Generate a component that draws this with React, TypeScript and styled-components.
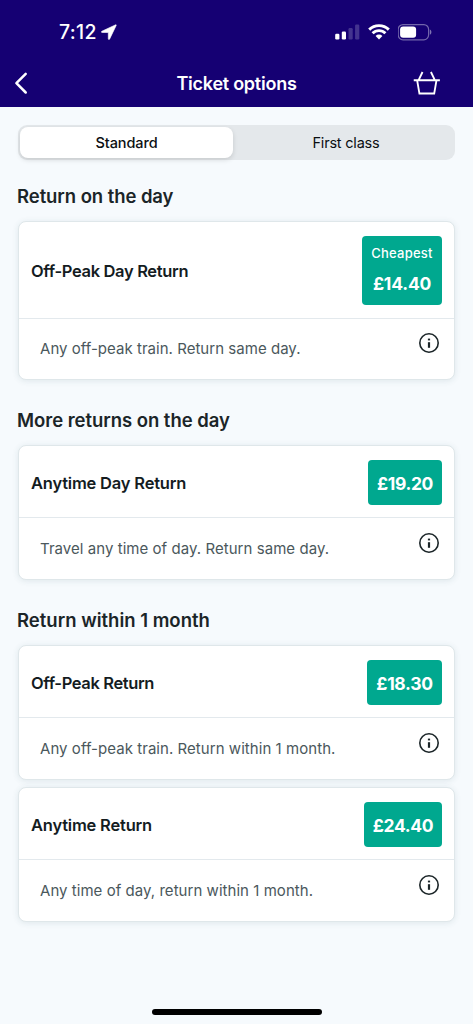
import React from 'react';
import styled, { createGlobalStyle } from 'styled-components';

const GlobalStyle = createGlobalStyle`
  * { box-sizing: border-box; }
  body { margin: 0; background: #f6fafd; }
  button { border: 0; padding: 0; background: none; font: inherit; color: inherit; }
`;

const Screen = styled.div`
  display: flex;
  flex-direction: column;
  width: 473px;
  height: 1024px;
  overflow: hidden;
  background: #f6fafd;
  font-family: Inter, 'Liberation Sans', sans-serif;
  color: #1b2528;
`;

const Header = styled.header`
  flex: none;
  height: 107px;
  background: #150073;
  color: #fff;
`;

const StatusBar = styled.div`
  display: flex;
  align-items: center;
  justify-content: space-between;
  height: 64px;
  padding: 0 40px 0 59px;
`;

const StatusGroup = styled.div<{ $gap: number }>`
  display: flex;
  align-items: center;
  gap: ${(p) => p.$gap}px;
`;

const Time = styled.span`
  font-size: 19.5px;
  font-weight: 500;
  letter-spacing: 0.3px;
  line-height: 24px;
`;

const NavBar = styled.nav`
  display: grid;
  grid-template-columns: 60px 1fr 60px;
  align-items: center;
  height: 39px;
`;

const NavButton = styled.button<{ $end?: boolean }>`
  display: flex;
  justify-content: ${(p) => (p.$end ? 'flex-end' : 'flex-start')};
  padding: ${(p) => (p.$end ? '0 32px 2px 0' : '0 0 2px 12px')};
`;

const Title = styled.h1`
  margin: 0;
  text-align: center;
  font-size: 18px;
  font-weight: 600;
  line-height: 24px;
  letter-spacing: -0.25px;
`;

const Main = styled.main`
  flex: 1;
  padding: 18px 18px 0;
`;

const Segments = styled.div`
  display: grid;
  grid-template-columns: 213px 1fr;
  gap: 5px;
  height: 35px;
  padding: 2px 1px 2px 2px;
  border-radius: 9px;
  background: #e4e8eb;
`;

const Segment = styled.button<{ $active?: boolean }>`
  border-radius: 8px;
  font-size: 14.5px;
  font-weight: ${(p) => (p.$active ? 500 : 400)};
  letter-spacing: ${(p) => (p.$active ? -0.1 : -0.2)}px;
  color: #0b0f12;
  background: ${(p) => (p.$active ? '#fff' : 'transparent')};
  box-shadow: ${(p) => (p.$active ? '0 2px 5px rgba(0, 0, 0, 0.13)' : 'none')};
`;

const Heading = styled.h2<{ $spacing: number; $top: number }>`
  margin: ${(p) => p.$top}px 0 13px -1px;
  font-size: 18.5px;
  font-weight: 600;
  line-height: 24px;
  letter-spacing: ${(p) => p.$spacing}px;
`;

const Card = styled.article<{ $tall?: boolean }>`
  height: ${(p) => (p.$tall ? 159 : 135)}px;
  border: 1px solid #dfe7ea;
  border-radius: 8px;
  background: #fff;
  box-shadow: 0 1px 6px rgba(40, 80, 90, 0.11);
  & + & { margin-top: 7px; }
`;

const CardTop = styled.div<{ $tall?: boolean }>`
  display: flex;
  align-items: center;
  justify-content: space-between;
  height: ${(p) => (p.$tall ? 97 : 72)}px;
  padding: ${(p) => (p.$tall ? '0 12px 2px' : '0 12px')};
  border-bottom: 1px solid #e3e9ed;
`;

const TicketName = styled.h3<{ $spacing: number }>`
  margin: 3px 0 0;
  font-size: 16.5px;
  font-weight: 600;
  line-height: 22px;
  letter-spacing: ${(p) => p.$spacing}px;
  color: #141c1f;
`;

const PriceButton = styled.button<{ $width: number; $tall?: boolean }>`
  display: flex;
  flex-direction: column;
  align-items: center;
  justify-content: center;
  gap: 10px;
  width: ${(p) => p.$width}px;
  height: ${(p) => (p.$tall ? 69 : 45)}px;
  margin-top: 2px;
  padding-top: ${(p) => (p.$tall ? 1 : 2)}px;
  border-radius: 4px;
  background: #00a88f;
  color: #fff;
`;

const Flag = styled.span`
  margin-top: -2px;
  font-size: 13px;
  font-weight: 500;
  line-height: 18px;
  letter-spacing: 0.25px;
`;

const Price = styled.span<{ $spacing: number }>`
  font-size: 17.5px;
  font-weight: 700;
  line-height: 24px;
  letter-spacing: ${(p) => p.$spacing}px;
`;

const CardBottom = styled.div`
  display: flex;
  align-items: flex-start;
  justify-content: space-between;
  padding: 14px 14px 0 21px;
`;

const Description = styled.p<{ $spacing: number; $top: number }>`
  margin: ${(p) => p.$top}px 0 0;
  font-size: 15px;
  line-height: 22px;
  letter-spacing: ${(p) => p.$spacing}px;
  color: #4b585c;
`;

const InfoButton = styled.button<{ $raised?: boolean }>`
  display: flex;
  margin-top: ${(p) => (p.$raised ? -1 : 0)}px;
`;

const HomeIndicator = styled.div`
  flex: none;
  width: 170px;
  height: 6px;
  margin: 0 auto 9px;
  border-radius: 3px;
  background: #000;
`;

const InfoIcon = () => (
  <svg width="22" height="22" viewBox="0 0 22 22" fill="none">
    <circle cx="11" cy="11" r="9.2" stroke="#1b2528" strokeWidth="1.6" />
    <path d="M11 10.2v5.6" stroke="#1b2528" strokeWidth="2.2" />
    <path d="M11 6.6v1.8" stroke="#1b2528" strokeWidth="2.2" />
  </svg>
);

interface Ticket {
  name: string;
  nameSpacing: number;
  price: string;
  priceWidth: number;
  priceSpacing: number;
  description: string;
  descriptionSpacing: number;
  flag?: string;
}

const TicketCard = ({ ticket }: { ticket: Ticket }) => {
  const tall = Boolean(ticket.flag);
  return (
    <Card $tall={tall}>
      <CardTop $tall={tall}>
        <TicketName $spacing={ticket.nameSpacing}>{ticket.name}</TicketName>
        <PriceButton $width={ticket.priceWidth} $tall={tall}>
          {ticket.flag && <Flag>{ticket.flag}</Flag>}
          <Price $spacing={ticket.priceSpacing}>{ticket.price}</Price>
        </PriceButton>
      </CardTop>
      <CardBottom>
        <Description $spacing={ticket.descriptionSpacing} $top={tall ? 5 : 6}>{ticket.description}</Description>
        <InfoButton $raised={tall} aria-label="Ticket information">
          <InfoIcon />
        </InfoButton>
      </CardBottom>
    </Card>
  );
};

interface Group {
  title: string;
  spacing: number;
  top: number;
  tickets: Ticket[];
}

const groups: Group[] = [
  {
    title: 'Return on the day', spacing: -0.07, top: 24,
    tickets: [
      { name: 'Off-Peak Day Return', nameSpacing: -0.34, price: '£14.40', priceWidth: 80, priceSpacing: -0.2, description: 'Any off-peak train. Return same day.', descriptionSpacing: 0.03, flag: 'Cheapest' },
    ],
  },
  {
    title: 'More returns on the day', spacing: -0.04, top: 28,
    tickets: [
      { name: 'Anytime Day Return', nameSpacing: -0.2, price: '£19.20', priceWidth: 74, priceSpacing: -0.35, description: 'Travel any time of day. Return same day.', descriptionSpacing: 0.05 },
    ],
  },
  {
    title: 'Return within 1 month', spacing: 0, top: 28,
    tickets: [
      { name: 'Off-Peak Return', nameSpacing: -0.37, price: '£18.30', priceWidth: 75, priceSpacing: -0.3, description: 'Any off-peak train. Return within 1 month.', descriptionSpacing: 0.05 },
      { name: 'Anytime Return', nameSpacing: -0.2, price: '£24.40', priceWidth: 78, priceSpacing: -0.35, description: 'Any time of day, return within 1 month.', descriptionSpacing: 0.04 },
    ],
  },
];

export default function App() {
  return (
    <Screen>
      <GlobalStyle />
      <Header>
        <StatusBar>
          <StatusGroup $gap={4}>
            <Time>7:12</Time>
            <svg width="16" height="16" viewBox="0 0 16 16">
              <path d="M14.7.8.9 7.2c-.8.4-.6 1.3.3 1.3h6.1v6.2c0 .9 1 1.1 1.4.2L15.2 1.4c.2-.5-.1-.8-.5-.6Z" fill="#fff" stroke="#fff" strokeWidth="0.6" strokeLinejoin="round" />
            </svg>
          </StatusGroup>
          <StatusGroup $gap={8}>
            <svg width="25" height="16" viewBox="0 0 25 16" fill="#fff">
              <rect x="0.2" y="9.7" width="4.2" height="5.8" rx="1.2" />
              <rect x="6.8" y="7.5" width="4.2" height="8" rx="1.2" />
              <rect x="13.5" y="4" width="4.2" height="11.5" rx="1.2" opacity="0.2" />
              <rect x="20.1" y="0.5" width="4.2" height="15" rx="1.2" opacity="0.2" />
            </svg>
            <svg width="22" height="16" viewBox="0 0 22 16" fill="none" stroke="#fff" strokeWidth="2.9">
              <path d="M1.2 5.6a14 14 0 0 1 19.6 0" />
              <path d="M4.6 9.3a9 9 0 0 1 12.8 0" />
              <path d="M11 15.4 7.6 12a4.8 4.8 0 0 1 6.8 0Z" fill="#fff" stroke="none" />
            </svg>
            <svg width="35" height="17" viewBox="0 0 35 17" fill="none">
              <rect x="0.2" y="0.6" width="30.4" height="15.2" rx="4.8" stroke="#fff" strokeOpacity="0.4" strokeWidth="1.2" />
              <rect x="2.1" y="2.6" width="16" height="11.2" rx="3" fill="#fff" />
              <path d="M31.9 5.6c2 .8 2 4.4 0 5.2Z" fill="#fff" fillOpacity="0.45" />
            </svg>
          </StatusGroup>
        </StatusBar>
        <NavBar>
          <NavButton aria-label="Back">
            <svg width="18" height="24" viewBox="0 0 18 24" fill="none">
              <path d="M13.7 2.9 4.4 12.2l9.3 9.3" stroke="#fff" strokeWidth="2.5" strokeLinecap="round" strokeLinejoin="round" />
            </svg>
          </NavButton>
          <Title>Ticket options</Title>
          <NavButton $end aria-label="Basket">
            <svg width="30" height="28" viewBox="0 0 30 28" fill="none" stroke="#fff" strokeWidth="2">
              <path d="M.8 11h28M10.2 2.2 6 11M19.2 2.2l4.2 8.8M4.4 11l2.5 14.3h15.8L25.2 11" />
            </svg>
          </NavButton>
        </NavBar>
      </Header>
      <Main>
        <Segments>
          <Segment $active>Standard</Segment>
          <Segment>First class</Segment>
        </Segments>
        {groups.map((group) => (
          <section key={group.title}>
            <Heading $spacing={group.spacing} $top={group.top}>{group.title}</Heading>
            {group.tickets.map((ticket) => (
              <TicketCard key={ticket.name} ticket={ticket} />
            ))}
          </section>
        ))}
      </Main>
      <HomeIndicator />
    </Screen>
  );
}
